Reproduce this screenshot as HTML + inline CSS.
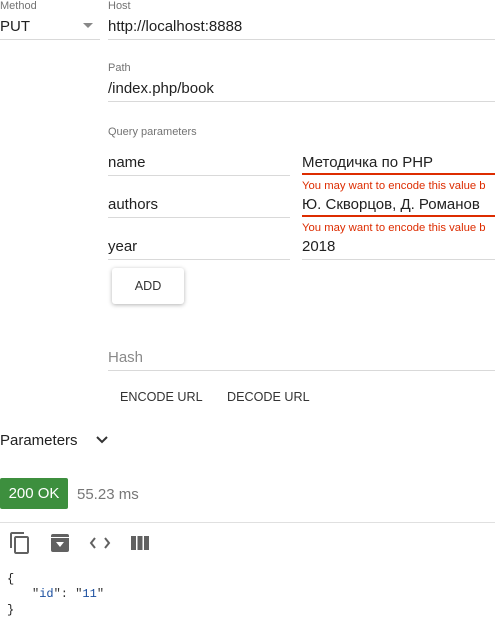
<!DOCTYPE html>
<html><head><meta charset="utf-8"><style>
body{margin:0;width:495px;height:620px;overflow:hidden;background:#fff;font-family:"Liberation Sans",sans-serif;position:relative;color:#212121}
.a{position:absolute;white-space:nowrap}
.lbl{font-size:11px;color:#737373}
.v{font-size:15px;color:#212121}
.ln{position:absolute;height:1px;background:#d9d9d9}
.rl{position:absolute;height:2px;background:#dd2c00}
.err{font-size:11.3px;color:#dd2c00}
.b{font-size:12.6px;color:#333}
.m{font-family:"Liberation Mono",monospace;font-size:12px}
</style></head><body>
<div class="a lbl" style="left:0;top:0px">Method</div>
<div class="a v" style="left:0;top:18px">PUT</div>
<div class="a" style="left:83px;top:23px;width:0;height:0;border-left:5px solid transparent;border-right:5px solid transparent;border-top:5px solid #888"></div>
<div class="ln" style="left:0;top:39px;width:100px"></div>
<div class="a lbl" style="left:108px;top:0px">Host</div>
<div class="a v" style="left:108px;top:18px">http://localhost:8888</div>
<div class="ln" style="left:108px;top:39px;width:387px"></div>
<div class="a lbl" style="left:108px;top:62px">Path</div>
<div class="a v" style="left:108px;top:80px">/index.php/book</div>
<div class="ln" style="left:108px;top:101px;width:387px"></div>
<div class="a lbl" style="left:108px;top:126px">Query parameters</div>

<div class="a v" style="left:108px;top:154px">name</div>
<div class="ln" style="left:108px;top:175px;width:182px"></div>
<div class="a v" style="left:302px;top:154px">Методичка по PHP</div>
<div class="rl" style="left:302px;top:173px;width:193px"></div>
<div class="a err" style="left:302px;top:180px">You may want to encode this value b</div>

<div class="a v" style="left:108px;top:196px">authors</div>
<div class="ln" style="left:108px;top:217px;width:182px"></div>
<div class="a v" style="left:302px;top:196px">Ю. Скворцов, Д. Романов</div>
<div class="rl" style="left:302px;top:215px;width:193px"></div>
<div class="a err" style="left:302px;top:222px">You may want to encode this value b</div>

<div class="a v" style="left:108px;top:238px">year</div>
<div class="ln" style="left:108px;top:259px;width:182px"></div>
<div class="a v" style="left:302px;top:238px">2018</div>
<div class="ln" style="left:302px;top:259px;width:193px"></div>

<div class="a b" style="left:112px;top:268px;width:72px;height:36px;line-height:37px;text-align:center;border-radius:3px;box-shadow:0 1px 4px rgba(0,0,0,.3)">ADD</div>

<div class="a" style="left:108px;top:349px;font-size:15px;color:#8a8a8a">Hash</div>
<div class="ln" style="left:108px;top:370px;width:387px"></div>
<div class="a b" style="left:120px;top:390px">ENCODE URL</div>
<div class="a b" style="left:227px;top:390px">DECODE URL</div>

<div class="a v" style="left:0;top:432px">Parameters</div>
<svg class="a" style="left:94px;top:433px" width="16" height="14"><path d="M3 4l5 5 5-5" stroke="#333" stroke-width="2" fill="none"/></svg>

<div class="a" style="left:0;top:478px;width:68px;height:31px;background:#3d8f3e;border-radius:2px;color:#fff;font-size:15px;line-height:32px;text-align:center">200 OK</div>
<div class="a" style="left:77px;top:486px;font-size:15px;color:#777">55.23 ms</div>
<div class="ln" style="left:0;top:522px;width:495px;background:#e0e0e0"></div>

<svg class="a" style="left:8px;top:531px" width="24" height="24" fill="#616161"><path d="M16 1H4c-1.1 0-2 .9-2 2v14h2V3h12V1zm3 4H8c-1.1 0-2 .9-2 2v14c0 1.1.9 2 2 2h11c1.1 0 2-.9 2-2V7c0-1.1-.9-2-2-2zm0 16H8V7h11v14z"/></svg>
<svg class="a" style="left:51px;top:534px" width="18" height="18"><rect x="0" y="0" width="18" height="18" rx="2" fill="#616161"/><rect x="0" y="3" width="18" height="1" fill="#fff"/><path d="M5 8h8l-4 5z" fill="#fff"/></svg>
<svg class="a" style="left:88px;top:533px" width="24" height="20"><path d="M7 5l-4 5 4 5M17 5l4 5-4 5" stroke="#616161" stroke-width="2" fill="none"/></svg>
<svg class="a" style="left:131px;top:536px" width="18" height="14" fill="#616161"><rect x="0" y="0" width="5" height="14"/><rect x="6.5" y="0" width="5" height="14"/><rect x="13" y="0" width="5" height="14"/></svg>

<div class="a m" style="left:7px;top:572px">{</div>
<div class="a m" style="left:32px;top:587px"><span style="color:#333">"</span><span style="color:#1a4fa0">id</span><span style="color:#333">": "</span><span style="color:#1a4fa0">11</span><span style="color:#333">"</span></div>
<div class="a m" style="left:7px;top:603px">}</div>
</body></html>
